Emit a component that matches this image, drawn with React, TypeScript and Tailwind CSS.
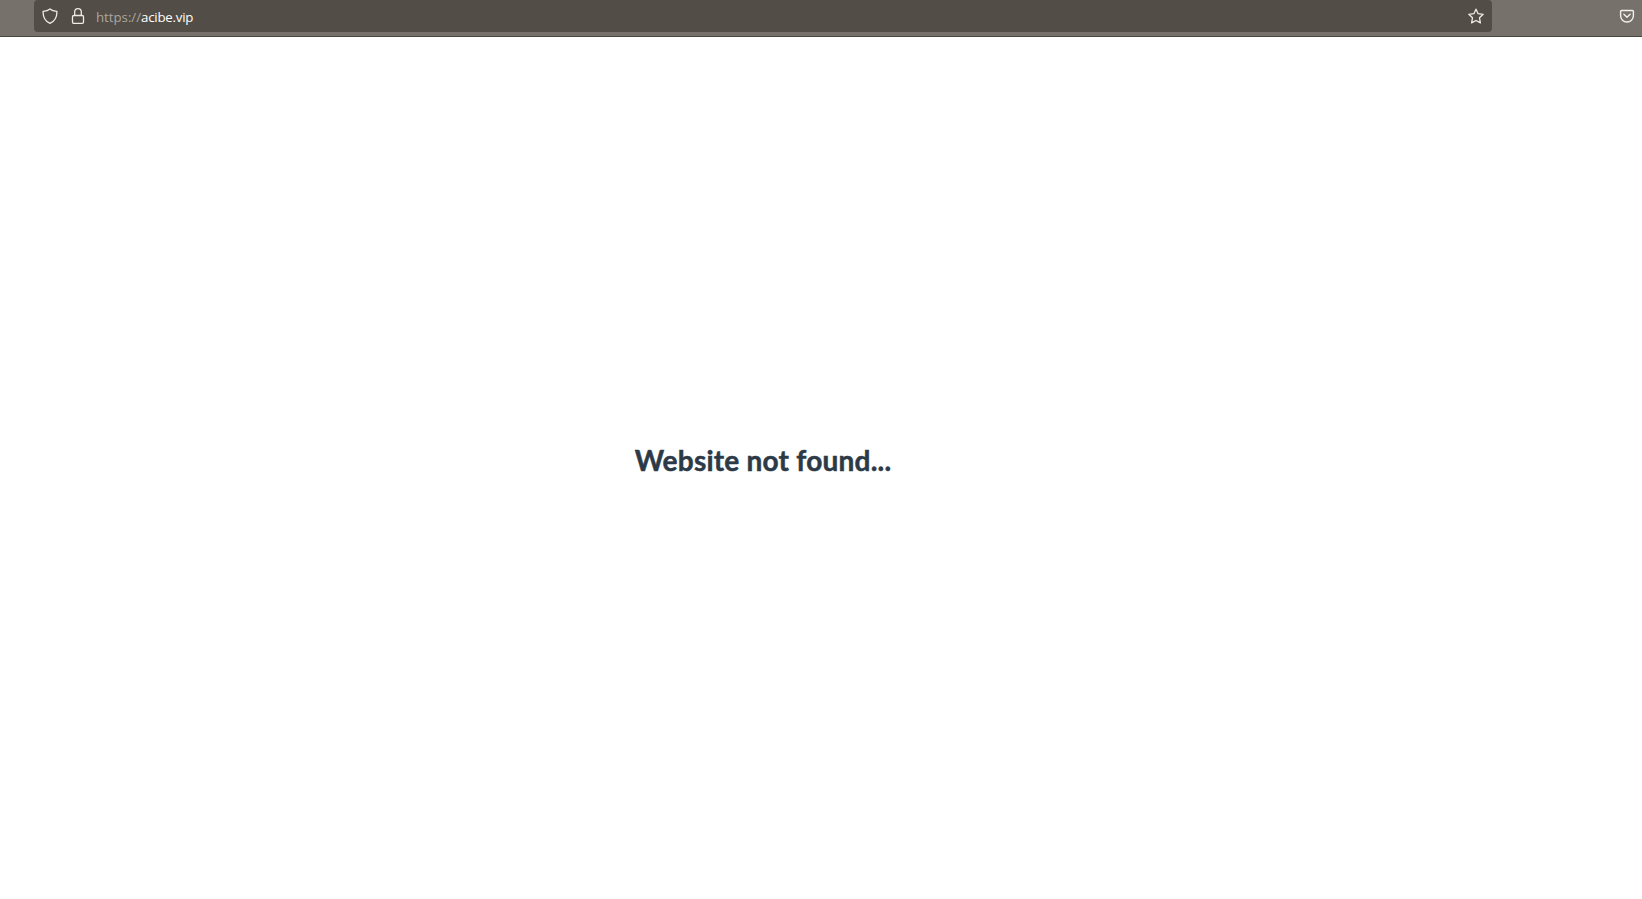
function ShieldIcon() {
  return (
    <svg className="h-4 w-4 shrink-0" viewBox="0 0 16 16" fill="none" stroke="#eeece8" strokeWidth="1.3" strokeLinejoin="round">
      <path d="M8 .9C6.2 2.5 3.8 3.1 1.1 3.3c-.2 5.5 1.7 9.8 6.9 12.1 5.2-2.3 7.1-6.6 6.9-12.1C12.2 3.1 9.8 2.5 8 .9z" />
    </svg>
  );
}

function LockIcon() {
  return (
    <svg className="h-4 w-4 shrink-0" viewBox="0 0 16 16" fill="none" stroke="#eeece8" strokeWidth="1.3">
      <rect x="2.5" y="7.5" width="11" height="7.8" rx="1.3" />
      <path d="M4.7 7.5V4a3.3 3.3 0 0 1 6.6 0v3.5" />
    </svg>
  );
}

function StarIcon() {
  return (
    <svg className="h-4 w-4 shrink-0" viewBox="0 0 16 16" fill="none" stroke="#eeece8" strokeWidth="1.3" strokeLinejoin="round">
      <path d="M8 1.2l2.1 4.5 5.1.6-3.7 3.5.9 5.1L8 12.5l-4.4 2.4.9-5.1L.8 6.3l5.1-.6z" />
    </svg>
  );
}

function PocketIcon() {
  return (
    <svg className="h-4 w-4 shrink-0" viewBox="0 0 16 16" fill="none" stroke="#f3f1ee" strokeWidth="1.4" strokeLinecap="round" strokeLinejoin="round">
      <path d="M2.7 2.5h10.6a1.1 1.1 0 0 1 1.1 1.1v4.2a6.4 6.2 0 0 1-12.8 0V3.6a1.1 1.1 0 0 1 1.1-1.1z" />
      <path d="M4.9 6.3L8 9.2l3.1-2.9" />
    </svg>
  );
}

export default function App() {
  return (
    <div className="flex h-[899px] w-full flex-col overflow-hidden bg-white">
      <header className="flex h-[37px] shrink-0 items-start justify-between border-b border-[#4a463f] bg-[#76716a] pr-[7px] pl-[34px]">
        <div className="flex h-8 w-[1458px] items-center rounded bg-[#524d46] px-2">
          <ShieldIcon />
          <span className="ml-3 flex">
            <LockIcon />
          </span>
          <span className="mt-px ml-[10px] flex-1 font-['Open_Sans','Noto_Sans',sans-serif] text-[13.3px] leading-4 tracking-[-0.24px] text-white">
            <span className="tracking-[-0.04px] text-[#aaa69f]">https://</span>acibe.vip
          </span>
          <StarIcon />
        </div>
        <span className="mt-2">
          <PocketIcon />
        </span>
      </header>
      <main className="flex flex-1 justify-center pt-[403px] pr-[116px]">
        <h1 className="h-10 font-['Lato','Open_Sans',sans-serif] text-[28px] leading-10 font-bold tracking-[0.23px] whitespace-nowrap text-[#2c3a47] [-webkit-text-stroke:0.5px_#2c3a47]">
          Website not found...
        </h1>
      </main>
    </div>
  );
}
